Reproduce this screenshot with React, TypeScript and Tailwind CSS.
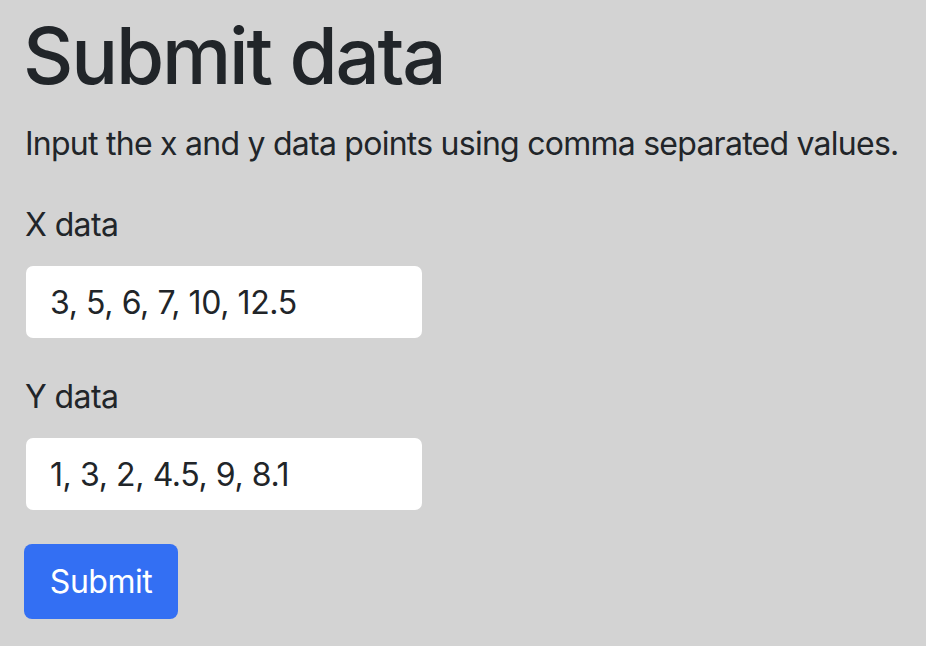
export default function App() {
  return (
    <div className="min-h-[646px] w-full bg-[#d3d3d3] text-[#212529] px-[25px] pt-[9px]" style={{ fontFamily: 'Inter, "Noto Sans", sans-serif' }}>
      <h1 className="-ml-[2px] text-[78px] leading-[94px] font-medium tracking-[-2.2px]">Submit data</h1>
      <p className="mt-[17px] text-[32px] leading-[48px] tracking-[-0.75px] whitespace-nowrap">Input the x and y data points using comma separated values.</p>
      <form className="flex flex-col items-start" onSubmit={(e) => e.preventDefault()}>
        <label className="mt-[33px] text-[32px] leading-[48px] tracking-[-0.6px]">X data</label>
        <input
          className="mt-[17px] ml-px w-[396px] h-[72px] rounded-[7px] bg-white px-[24px] text-[32px] leading-[48px] tracking-[-0.4px] outline-none"
          defaultValue="3, 5, 6, 7, 10, 12.5"
        />
        <label className="mt-[35px] text-[32px] leading-[48px] tracking-[-0.6px]">Y data</label>
        <input
          className="mt-[17px] ml-px w-[396px] h-[72px] rounded-[7px] bg-white px-[24px] text-[32px] leading-[48px] tracking-[-0.4px] outline-none"
          defaultValue="1, 3, 2, 4.5, 9, 8.1"
        />
        <button type="submit" className="mt-[34px] -ml-px w-[154px] h-[75px] rounded-[8px] bg-[#336ff3] text-white text-[32px] leading-[48px] tracking-[-0.5px]">
          Submit
        </button>
      </form>
    </div>
  );
}
